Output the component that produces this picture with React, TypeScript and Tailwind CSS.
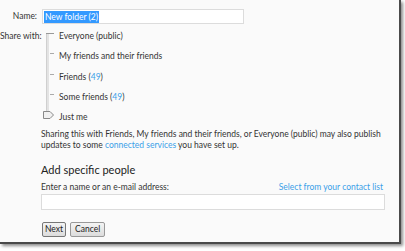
import React from 'react'

const options = [
  { label: 'Everyone (public)' },
  { label: 'My friends and their friends' },
  { label: 'Friends', count: 49 },
  { label: 'Some friends', count: 49 },
  { label: 'Just me' },
]

export default function App() {
  return (
    <div className="w-[405px] h-[251px] bg-white overflow-hidden" style={{ fontFamily: 'Lato, "Noto Sans", sans-serif' }}>
      <div className="w-[401px] h-[244px] bg-[#fafafa] border-r-2 border-b-2 border-[#4a4a4a] shadow-[2px_2px_3px_rgba(0,0,0,0.45)] text-[8.5px] text-[#333]">
        {/* name row */}
        <div className="flex items-center pt-[9px]">
          <div className="w-[42px] text-right pr-[5px] leading-none">Name:</div>
          <div className="w-[202px] h-[15px] border border-[#dcdcdc] bg-white flex items-center pl-[1px]">
            <span className="bg-[#3399ff] text-white leading-[12px] px-[1px]">New folder (2)</span>
          </div>
        </div>

        {/* share with */}
        <div className="flex mt-[7px]">
          <div className="w-[37px] text-right whitespace-nowrap leading-[11px] shrink-0">Share with:</div>
          <div className="flex ml-[5px]">
            <div className="relative w-[16px] h-[92px]">
              <div className="absolute left-[4px] top-[2px] w-[3px] h-[83px] bg-[#e3e3e3] border-l border-[#cfcfcf]" />
              <div className="absolute left-[4px] top-[2px] w-[8px] h-px bg-[#999]" />
              <div className="absolute left-[8px] top-[22px] w-[4px] h-px bg-[#aaa]" />
              <div className="absolute left-[8px] top-[43px] w-[4px] h-px bg-[#aaa]" />
              <div className="absolute left-[8px] top-[63px] w-[4px] h-px bg-[#aaa]" />
              <svg className="absolute left-[1px] top-[80px]" width="11" height="8" viewBox="0 0 11 8">
                <path d="M0.5 0.5 H7 L10.5 4 L7 7.5 H0.5 Z" fill="#f0f0f0" stroke="#888" />
              </svg>
            </div>
            <div className="flex flex-col ml-[1px] gap-[9.25px] leading-[11px]">
              {options.map((o) => (
                <div key={o.label} className="whitespace-nowrap">
                  {o.label}
                  {o.count !== undefined && (
                    <>
                      {' ('}
                      <span className="text-[#3a9fe8]">{o.count}</span>
                      {')'}
                    </>
                  )}
                </div>
              ))}
            </div>
          </div>
        </div>

        <div className="pl-[41px] pr-[16px]">
          <p className="mt-[6px] leading-[11px] whitespace-nowrap">
            Sharing this with Friends, My friends and their friends, or Everyone (public) may also publish
            <br />
            updates to some <span className="text-[#3a9fe8]">connected services</span> you have set up.
          </p>

          <h2 className="mt-[11px] text-[11px] leading-[16px] text-[#222]">Add specific people</h2>

          <div className="flex justify-between mt-[4px] leading-[11px]">
            <span>Enter a name or an e-mail address:</span>
            <span className="text-[#3a9fe8]">Select from your contact list</span>
          </div>
          <div className="mt-[1px] w-[344px] h-[16px] border border-[#dcdcdc] bg-white" />

          <div className="flex gap-[4px] mt-[12px] ml-[1px]">
            <button className="h-[15px] px-[2px] border border-[#777] rounded-[2px] bg-gradient-to-b from-[#f4f4f4] to-[#dcdcdc] text-[8.5px] leading-none text-[#222]">Next</button>
            <button className="h-[15px] px-[4px] border border-[#999] rounded-[2px] bg-gradient-to-b from-[#f4f4f4] to-[#dcdcdc] text-[8.5px] leading-none text-[#222]">Cancel</button>
          </div>
        </div>
      </div>
    </div>
  )
}
